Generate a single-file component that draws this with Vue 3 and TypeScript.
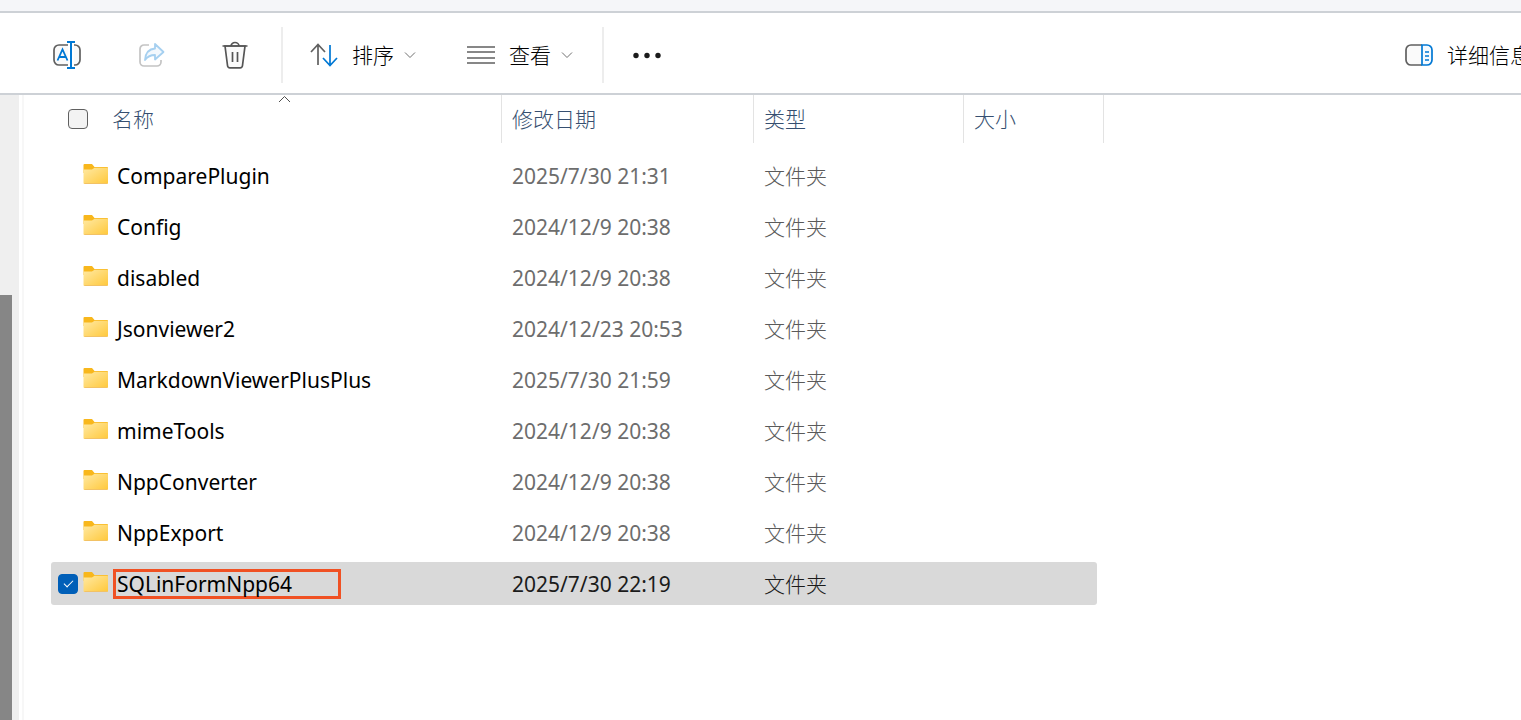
<script setup lang="ts">
import { ref } from 'vue'

interface Entry {
  name: string
  modified: string
  selected: boolean
}

const kind = '文件夹'
const allSelected = ref(false)

const entries = ref<Entry[]>([
  { name: 'ComparePlugin', modified: '2025/7/30 21:31', selected: false },
  { name: 'Config', modified: '2024/12/9 20:38', selected: false },
  { name: 'disabled', modified: '2024/12/9 20:38', selected: false },
  { name: 'Jsonviewer2', modified: '2024/12/23 20:53', selected: false },
  { name: 'MarkdownViewerPlusPlus', modified: '2025/7/30 21:59', selected: false },
  { name: 'mimeTools', modified: '2024/12/9 20:38', selected: false },
  { name: 'NppConverter', modified: '2024/12/9 20:38', selected: false },
  { name: 'NppExport', modified: '2024/12/9 20:38', selected: false },
  { name: 'SQLinFormNpp64', modified: '2025/7/30 22:19', selected: true },
])
</script>

<template>
  <div class="explorer">
    <div class="strip"></div>

    <header class="toolbar">
      <div class="group icons">
        <button type="button" aria-label="重命名">
          <svg width="28" height="28" viewBox="0 0 28 28" fill="none">
            <rect x="1" y="4" width="26" height="20" rx="5" fill="#fafafa" stroke="#606060" stroke-width="1.700" />
            <path d="M15 2h6v24h-6z" fill="#fff" />
            <path d="M4.500 19.500 9.500 8.500 14.500 19.500M6.200 16h6.600" stroke="#0078d4" stroke-width="1.800" />
            <path d="M14 1h8M14 27h8M18 1v26" stroke="#0078d4" stroke-width="2" />
          </svg>
        </button>
        <button type="button" aria-label="共享" disabled>
          <svg width="28" height="28" viewBox="0 0 28 28" fill="none">
            <path d="M12 4H7a4 4 0 0 0-4 4v13a4 4 0 0 0 4 4h13a4 4 0 0 0 4-4v-2" stroke="#c4c4c4" stroke-width="1.700" />
            <path d="M18 3l8.500 8L18 18.500V14c-5 0-7.500 1.500-10 5C8.500 12 12 8 18 7.500z" fill="#f3f8fd" stroke="#a6d0f0" stroke-width="1.800" stroke-linejoin="round" />
          </svg>
        </button>
        <button type="button" aria-label="删除">
          <svg width="28" height="28" viewBox="0 0 28 28" fill="none" stroke="#555" stroke-width="1.700">
            <path d="M4 5l2.500 19.500a2.500 2.500 0 0 0 2.500 2.300h10a2.500 2.500 0 0 0 2.500-2.300L24 5z" fill="#fafafa" />
            <path d="M1.500 5h25M10 5a4 3.500 0 0 1 8 0M11.500 11v10M16.500 11v10" />
          </svg>
        </button>
      </div>

      <div class="group menus">
        <button type="button">
          <svg width="28" height="28" viewBox="0 0 28 28" fill="none" stroke-width="1.700">
            <path d="M8 24V4M1 11l7-7.500L15 11" stroke="#606060" />
            <path d="M20 4v20M13 17l7 7.500L27 17" stroke="#0078d4" />
          </svg>
          <span class="label">排序</span>
          <svg class="chevron" width="12" height="8" viewBox="0 0 12 8" fill="none" stroke="#707070">
            <path d="M1 1.500l5 5 5-5" />
          </svg>
        </button>
        <button type="button">
          <svg width="28" height="28" viewBox="0 0 28 28" fill="none" stroke="#606060" stroke-width="1.700">
            <path d="M0 6h28M0 11h28M0 17h28M0 22h28" />
          </svg>
          <span class="label">查看</span>
          <svg class="chevron" width="12" height="8" viewBox="0 0 12 8" fill="none" stroke="#707070">
            <path d="M1 1.500l5 5 5-5" />
          </svg>
        </button>
      </div>

      <button type="button" class="more" aria-label="查看更多">
        <svg width="28" height="28" viewBox="0 0 28 28" fill="#1b1b1b">
          <circle cx="3" cy="14.500" r="2.700" />
          <circle cx="14" cy="14.500" r="2.700" />
          <circle cx="25" cy="14.500" r="2.700" />
        </svg>
      </button>

      <button type="button" class="details">
        <svg width="28" height="28" viewBox="0 0 28 28" fill="none" stroke-width="1.700">
          <path d="M17 4H6a5 5 0 0 0-5 5v10a5 5 0 0 0 5 5h11" fill="#fafafa" stroke="#606060" />
          <path d="M17 4h5a5 5 0 0 1 5 5v10a5 5 0 0 1-5 5h-5z" fill="#f5faff" stroke="#0078d4" />
          <path d="M20 11h4M20 15h4M20 19h4" stroke="#0078d4" />
        </svg>
        <span class="label">详细信息</span>
      </button>
    </header>

    <main class="content">
      <aside class="nav"><div class="thumb"></div></aside>

      <table class="files">
        <thead>
          <tr>
            <th scope="col" class="name" aria-sort="ascending">
              <input v-model="allSelected" type="checkbox" aria-label="全选" />
              <span>名称</span>
              <svg class="sorted" width="13" height="8" viewBox="0 0 13 8" fill="none" stroke="#505050">
                <path d="M1 7l5.500-5.500L12 7" />
              </svg>
            </th>
            <th scope="col">修改日期</th>
            <th scope="col">类型</th>
            <th scope="col">大小</th>
          </tr>
        </thead>
        <tbody>
          <tr v-for="entry in entries" :key="entry.name" :class="{ selected: entry.selected }">
            <td class="name">
              <input v-model="entry.selected" type="checkbox" :aria-label="entry.name" />
              <svg class="folder" width="26" height="22" viewBox="0 0 26 22">
                <defs>
                  <linearGradient id="folder-front" x1="0" y1="0" x2="1" y2="1">
                    <stop offset="0" stop-color="#ffe9a3" />
                    <stop offset="1" stop-color="#ffc83a" />
                  </linearGradient>
                </defs>
                <path d="M0.500 2q0-1 1-1H9l2.500 3H24q1 0 1 1v5H0.500z" fill="#f8b71c" />
                <path d="M0.500 6.500H9L11.500 4.800H24q1 0 1 1V20q0 1-1 1H1.500q-1 0-1-1z" fill="url(#folder-front)" />
                <path d="M1.500 20.500H24" stroke="#f2c265" />
              </svg>
              <span class="filename">{{ entry.name }}</span>
            </td>
            <td class="date">{{ entry.modified }}</td>
            <td>{{ kind }}</td>
            <td></td>
          </tr>
        </tbody>
      </table>
    </main>
  </div>
</template>

<style>
body {
  margin: 0;
  background: #fff;
}
</style>

<style scoped>
.explorer {
  display: flex;
  flex-direction: column;
  min-height: 100vh;
  overflow: hidden;
  background: #fff;
  color: #000;
  font: 300 21px/28px "Noto Sans", "Noto Sans CJK SC", sans-serif;
}

.strip {
  height: 11px;
  background: #f5f6f9;
  border-bottom: 2px solid #cdd1d6;
}

.toolbar {
  display: flex;
  align-items: center;
  height: 76px;
  padding: 4px 0 0 53px;
  border-bottom: 2px solid #cdd1d6;
  overflow: hidden;
}

.toolbar button {
  display: flex;
  align-items: center;
  flex: none;
  padding: 0;
  border: 0;
  background: none;
  color: inherit;
  font: inherit;
}

.toolbar svg {
  display: block;
  flex: none;
}

.group {
  display: flex;
  align-items: center;
  height: 56px;
  border-right: 2px solid #ededed;
}

.icons {
  gap: 56px;
  padding-right: 32px;
}

.menus {
  gap: 51px;
  padding: 0 29px 0 27px;
}

.label {
  margin-left: 14px;
  white-space: nowrap;
}

.chevron {
  margin-left: 10px;
}

.more {
  margin-left: 29px;
}

/* The last label runs past the window edge. */
.toolbar .details {
  margin-left: auto;
  margin-right: -10px;
}

.content {
  display: flex;
  flex: 1;
}

.nav {
  display: flex;
  flex-direction: column;
  justify-content: flex-end;
  flex: none;
  width: 19px;
  margin-right: 3px;
  background: #efefef;
}

.thumb {
  width: 12px;
  height: 68%;
  background: #868686;
}

.files {
  display: block;
  flex: 1;
  padding-left: 27px;
  border-left: 2px solid #f7f7f7;
}

thead {
  display: block;
}

tbody {
  display: flex;
  flex-direction: column;
  gap: 8px;
  padding-top: 11px;
}

tr {
  display: grid;
  grid-template-columns: 451px 252px 210px 140px;
  width: max-content;
}

tbody tr {
  grid-template-columns: 451px 252px 210px 133px;
  height: 43px;
  border-radius: 3px;
}

th,
td {
  display: flex;
  align-items: center;
  padding: 0 0 0 10px;
  color: #5a5a5a;
  white-space: nowrap;
}

th {
  position: relative;
  height: 48px;
  border-right: 1px solid #e3e3e3;
  color: #364f70;
  font-weight: 300;
}

th.name {
  padding-left: 17px;
}

td.name {
  padding-left: 7px;
  color: #000;
  font-weight: 400;
}

.date {
  color: #6d6d6d;
  font-weight: 400;
}

input {
  appearance: none;
  flex: none;
  width: 20px;
  height: 20px;
  margin: 0;
  border: 1px solid #606060;
  border-radius: 4px;
  background: #f3f3f3;
}

th input {
  margin-right: 24px;
}

td input {
  visibility: hidden;
}

.sorted {
  position: absolute;
  top: 0;
  left: 227px;
}

.folder {
  flex: none;
  margin: 0 4px 3px 5px;
}

.filename {
  padding: 0 46px 0 1px;
  border: 3px solid transparent;
  line-height: 24px;
}

.selected {
  background: #d9d9d9;
}

.selected td {
  color: #1b1b1b;
}

.selected td.name {
  color: #000;
}

.selected input {
  display: grid;
  place-items: center;
  visibility: visible;
  border-color: #005fb8;
  background: #005fb8;
}

.selected input::before {
  content: "";
  width: 8px;
  height: 4px;
  margin-bottom: 3px;
  border: solid #fff;
  border-width: 0 0 1px 1px;
  transform: rotate(-45deg);
}

.selected .filename {
  border-color: #f05123;
}
</style>
